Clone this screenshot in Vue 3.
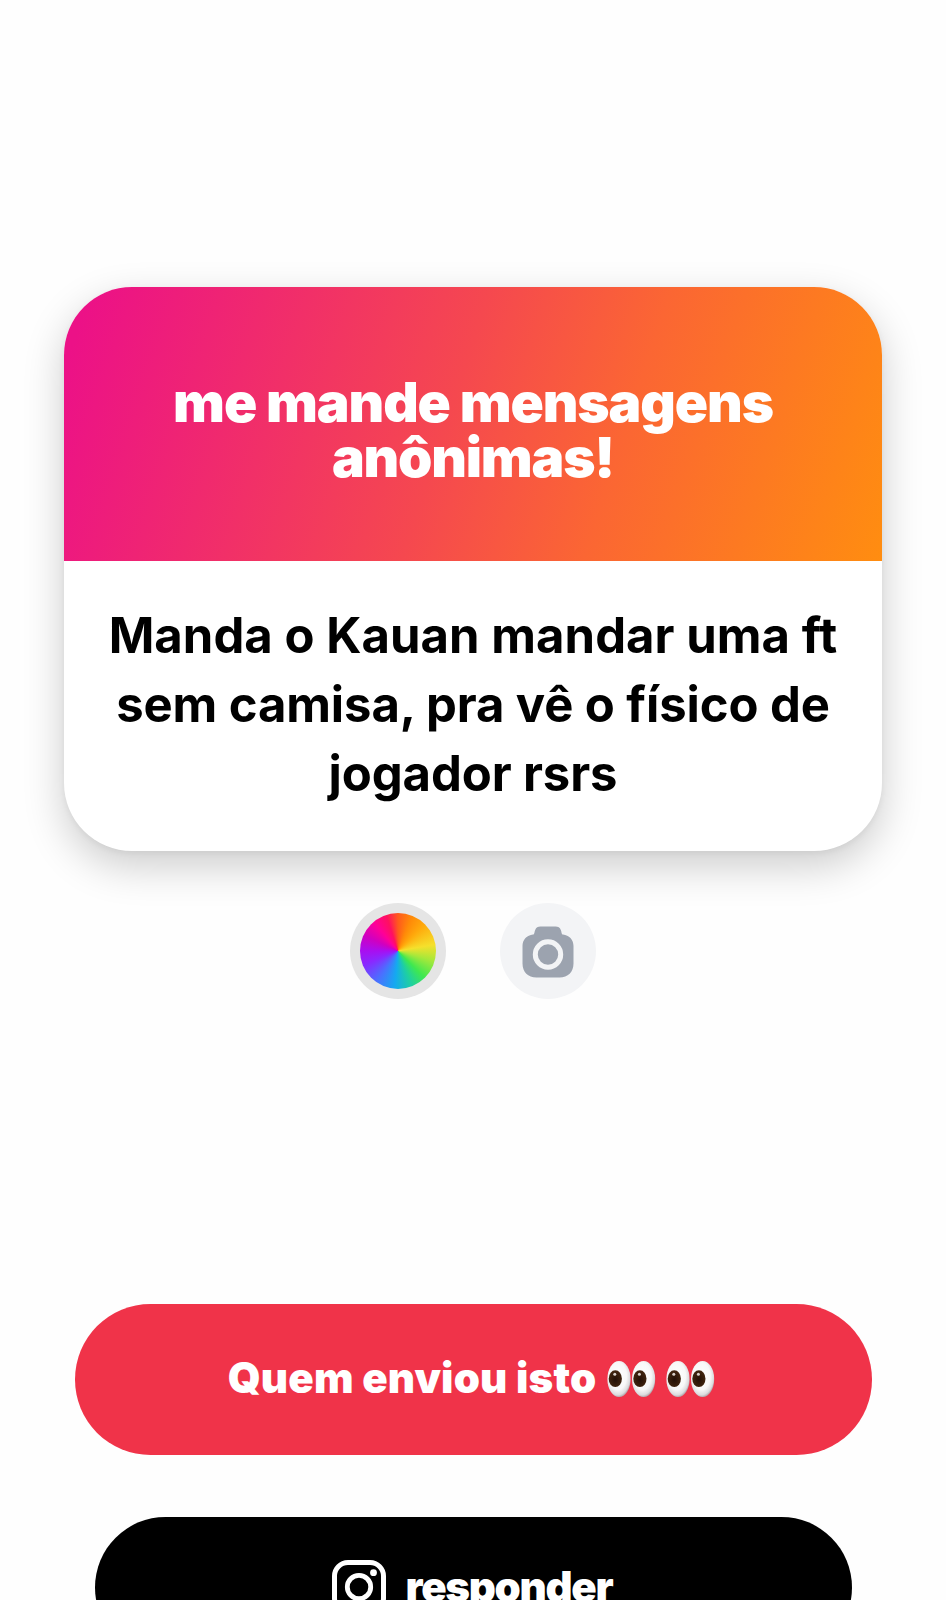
<script setup>
const title = [
  { text: 'me mande mensagens', cls: 't1' },
  { text: 'anônimas!', cls: 't2' },
]
const message = [
  { text: 'Manda o Kauan mandar uma ft', cls: 'm1' },
  { text: 'sem camisa, pra vê o físico de', cls: 'm2' },
  { text: 'jogador rsrs', cls: 'm3' },
]
</script>

<template>
  <main class="screen">
    <section class="card">
      <header class="card-head">
        <div v-for="l in title" :key="l.cls" class="line"><span :class="l.cls">{{ l.text }}</span></div>
      </header>
      <div class="card-body">
        <div v-for="l in message" :key="l.cls" class="line"><span :class="l.cls">{{ l.text }}</span></div>
      </div>
    </section>

    <div class="tools">
      <button class="tool tool-color" aria-label="Cor"><span class="wheel"></span></button>
      <button class="tool tool-camera" aria-label="Câmera">
        <svg width="52" height="52" viewBox="0 0 52 52">
          <path d="M11 8.500C12.500 8.500 12.300 6 13.200 3.900C14.200 1.500 15.800.5 18.500.5H33.500C36.200.5 37.800 1.500 38.800 3.900C39.700 6 39.500 8.500 41 8.500C47 9.300 51.500 13.500 51.500 20V37.500C51.500 46 46 51.500 37.500 51.500H14.500C6 51.500.5 46 .5 37.500V20C.5 13.500 5 9.300 11 8.500Z" fill="#9ca3af" />
          <circle cx="26" cy="28.500" r="12.700" fill="none" stroke="#f3f4f6" stroke-width="5" />
        </svg>
      </button>
    </div>

    <button class="btn btn-who">
      <span class="who-text">Quem enviou isto</span>
      <svg class="eyes" width="108" height="38" viewBox="0 0 108 38" role="img" aria-label="olhos">
        <defs>
          <radialGradient id="white" cx=".45" cy=".42" r=".58">
            <stop offset="0" stop-color="#fff" />
            <stop offset=".65" stop-color="#f8f8f8" />
            <stop offset=".9" stop-color="#dcdcde" />
            <stop offset="1" stop-color="#b4aeb2" />
          </radialGradient>
          <radialGradient id="iris" cx=".5" cy=".55" r=".55">
            <stop offset="0" stop-color="#241006" />
            <stop offset="1" stop-color="#43260f" />
          </radialGradient>
        </defs>
        <g v-for="x in [0, 24.600, 59, 83.600]" :key="x" :transform="`translate(${x} 0)`">
          <ellipse cx="12" cy="19" rx="11.600" ry="18" fill="url(#white)" />
          <ellipse cx="8.300" cy="18.700" rx="6.600" ry="8.400" fill="url(#iris)" />
          <circle cx="7.800" cy="14.200" r="1.500" fill="#d8cfc8" />
        </g>
      </svg>
    </button>

    <button class="btn btn-reply">
      <svg width="54" height="54" viewBox="0 0 54 54" fill="none" stroke="#fff">
        <rect x="2.500" y="2.500" width="49" height="49" rx="13.500" stroke-width="5" />
        <circle cx="27" cy="27" r="11.700" stroke-width="4.800" />
        <circle cx="41.500" cy="12.700" r="3.400" fill="#fff" stroke="none" />
      </svg>
      <span class="reply-text">responder</span>
    </button>
  </main>
</template>

<style>
html, body { background: #fefefe; }
</style>

<style scoped>
.screen {
  box-sizing: border-box;
  width: 946px;
  height: 1600px;
  padding-top: 287px;
  overflow: hidden;
  display: flex;
  flex-direction: column;
  align-items: center;
  background: #fefefe;
  font-family: Inter, "Liberation Sans", sans-serif;
}
.card {
  flex: none;
  width: 818px;
  height: 564px;
  border-radius: 68px;
  background: #fff;
  box-shadow: 0 15px 42px rgba(0, 0, 0, .2), 0 2px 6px rgba(0, 0, 0, .05);
}
.card-head {
  box-sizing: border-box;
  height: 273.500px;
  padding-top: 88px;
  border-radius: 68px 68px 0 0;
  background: linear-gradient(108deg, #ec1187 3%, #f5484f 47%, #fb6633 67%, #ff8d10 100%);
  color: #fff;
  font-size: 55px;
  line-height: 55px;
  font-weight: 900;
}
.line { display: flex; justify-content: center; white-space: nowrap; }
.card-body {
  padding-top: 40px;
  color: #000;
  font-size: 49px;
  line-height: 69.200px;
  font-weight: 700;
}
.t1 { letter-spacing: -1.100px; }
.t2 { letter-spacing: -1.200px; }
.m1 { letter-spacing: .05px; }
.m2, .m3 { letter-spacing: -.1px; }
.tools { flex: none; display: flex; gap: 54px; margin: 52px 0 305px; }
button { border: 0; padding: 0; font-family: inherit; }
.tool {
  width: 96px;
  height: 96px;
  border-radius: 50%;
  display: flex;
  align-items: center;
  justify-content: center;
}
.tool-color { background: #e5e5e5; }
.tool-camera { background: #f3f4f6; }
.tool-camera svg { margin: 1px 0 0; }
.wheel {
  width: 76px;
  height: 76px;
  border-radius: 50%;
  background: conic-gradient(#ff5a1c 0deg, #ff8a08 22deg, #ffaa0c 45deg, #f5e02c 80deg, #a8e83a 105deg, #3fe850 135deg, #1fd0a0 158deg, #14aaf0 185deg, #4a70ff 215deg, #8a28ff 248deg, #a80ff0 270deg, #d000c0 295deg, #ff0098 320deg, #ff1060 342deg, #ff5a1c 360deg);
}
.btn {
  flex: none;
  display: flex;
  align-items: center;
  justify-content: center;
  color: #fff;
  font-size: 42px;
  font-weight: 900;
  white-space: nowrap;
}
.btn-who { box-sizing: border-box; width: 797px; height: 150.500px; padding-right: 3px; border-radius: 76px; background: #f03349; gap: 11px; }
.who-text { letter-spacing: .15px; margin-top: -3px; }
.btn-reply { box-sizing: border-box; width: 757px; height: 141px; padding-right: 2px; margin-top: 62px; border-radius: 71px; background: #000; gap: 20px; }
.reply-text { letter-spacing: -1.300px; margin-top: -1px; }
</style>
